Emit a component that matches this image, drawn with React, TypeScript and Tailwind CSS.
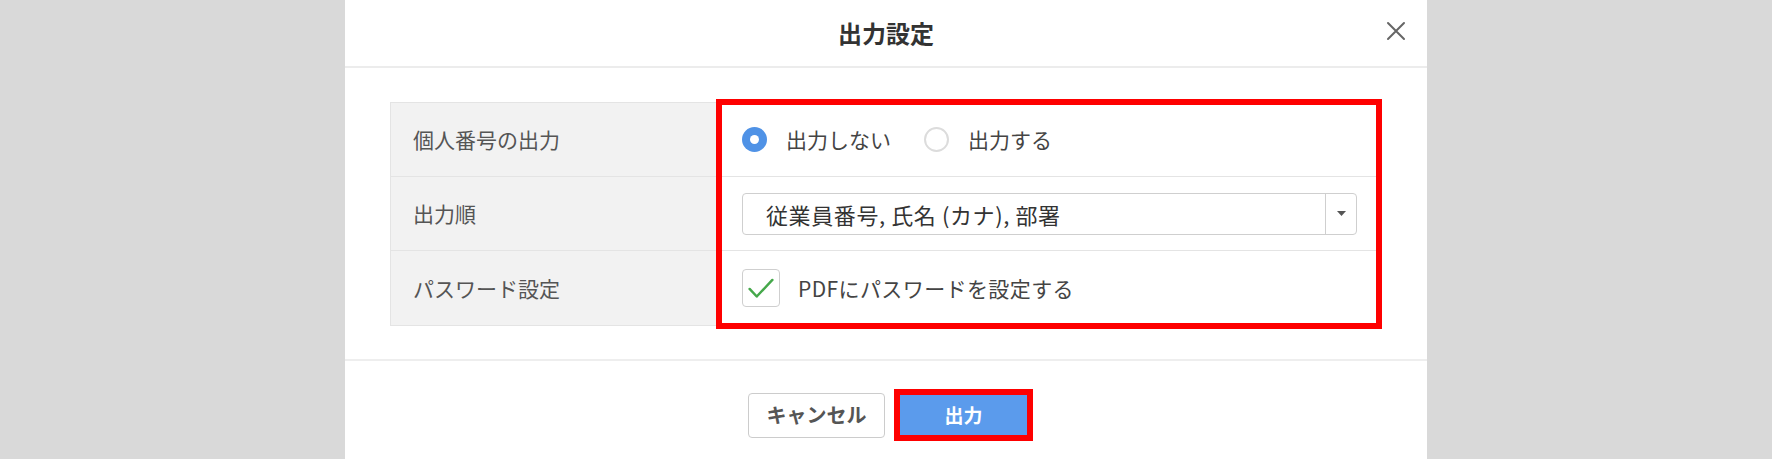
type Row = { label: string; content: React.ReactNode };

function Radio({ checked, label }: { checked?: boolean; label: string }) {
  return (
    <label className="flex items-center gap-[19px]">
      {checked ? (
        <span className="flex h-[25px] w-[25px] items-center justify-center rounded-full bg-[#4f92e6]">
          <span className="h-[9px] w-[9px] rounded-full bg-white" />
        </span>
      ) : (
        <span className="h-[25px] w-[25px] rounded-full border-2 border-[#dcdcdc] bg-white" />
      )}
      <span className="text-[21px] leading-none text-[#444]">{label}</span>
    </label>
  );
}

function Select({ value }: { value: string }) {
  return (
    <div className="flex h-[42px] w-full items-stretch rounded-[4px] border border-[#cfcfcf] bg-white">
      <div className="flex flex-1 items-center pl-[23px] text-[22px] leading-none tracking-[0.6px] text-[#333]">{value}</div>
      <div className="flex w-[31px] items-center justify-center border-l border-[#cfcfcf]">
        <svg width="9" height="5" viewBox="0 0 9 5" aria-hidden>
          <path d="M0 0h9L4.5 5z" fill="#555" />
        </svg>
      </div>
    </div>
  );
}

function Checkbox({ label }: { label: string }) {
  return (
    <label className="flex items-center gap-[18px]">
      <span className="flex h-[38px] w-[38px] items-center justify-center rounded-[4px] border border-[#cfcfcf] bg-white">
        <svg width="38" height="38" viewBox="0 0 38 38" aria-hidden>
          <path d="M7 20l7.5 8L31 10.5" fill="none" stroke="#45a84b" strokeWidth="2.6" strokeLinecap="round" strokeLinejoin="round" />
        </svg>
      </span>
      <span className="text-[21px] leading-none tracking-[0.4px] text-[#444]">{label}</span>
    </label>
  );
}

export default function App() {
  const rows: Row[] = [
    {
      label: '個人番号の出力',
      content: (
        <div className="flex items-center gap-[33px]">
          <Radio checked label="出力しない" />
          <Radio label="出力する" />
        </div>
      ),
    },
    { label: '出力順', content: <Select value="従業員番号, 氏名 (カナ), 部署" /> },
    { label: 'パスワード設定', content: <Checkbox label="PDFにパスワードを設定する" /> },
  ];

  return (
    <div className="flex h-[459px] w-[1772px] justify-center overflow-hidden bg-[#d9d9d9] font-['Noto_Sans_CJK_JP','Noto_Sans',sans-serif]">
      <div className="flex h-full w-[1082px] flex-col bg-white">
        <header className="relative flex h-[68px] shrink-0 items-center justify-center border-b-2 border-[#ececec]">
          <h1 className="text-[24px] font-bold leading-none text-[#333]">出力設定</h1>
          <button className="absolute right-[21px] top-[21px]" aria-label="閉じる">
            <svg width="20" height="20" viewBox="0 0 20 20" aria-hidden>
              <path d="M2 2l16 16M18 2L2 18" stroke="#666" strokeWidth="2" strokeLinecap="round" />
            </svg>
          </button>
        </header>

        <div className="px-[45px] pb-[33px] pt-[34px]">
          <div className="relative border border-[#e4e4e4]">
            {rows.map((r, i) => (
              <div
                key={r.label}
                className={`grid h-[74px] grid-cols-[327px_1fr] ${i < rows.length - 1 ? 'border-b border-[#e4e4e4]' : ''}`}
              >
                <div className="flex items-center border-r border-[#e4e4e4] bg-[#f2f2f2] pl-[22px] text-[21px] leading-none text-[#555]">
                  {r.label}
                </div>
                <div className="flex items-center px-[24px]">{r.content}</div>
              </div>
            ))}
            {/* annotation frame */}
            <div className="pointer-events-none absolute -bottom-[4px] -right-[1px] -top-[4px] left-[325px] border-[6px] border-[#fe0000]" />
          </div>
        </div>

        <footer className="flex items-center justify-center gap-[9px] border-t-2 border-[#eeeeee] pl-[9px] pt-[28px]">
          <button className="h-[45px] w-[137px] rounded-[4px] border border-[#cccccc] bg-white text-[20px] font-bold text-[#555]">
            キャンセル
          </button>
          <div className="border-[6px] border-[#fe0000]">
            <button className="flex h-[40px] w-[127px] items-center justify-center bg-[#5b9bec] text-[19px] font-bold text-white">
              出力
            </button>
          </div>
        </footer>
      </div>
    </div>
  );
}
